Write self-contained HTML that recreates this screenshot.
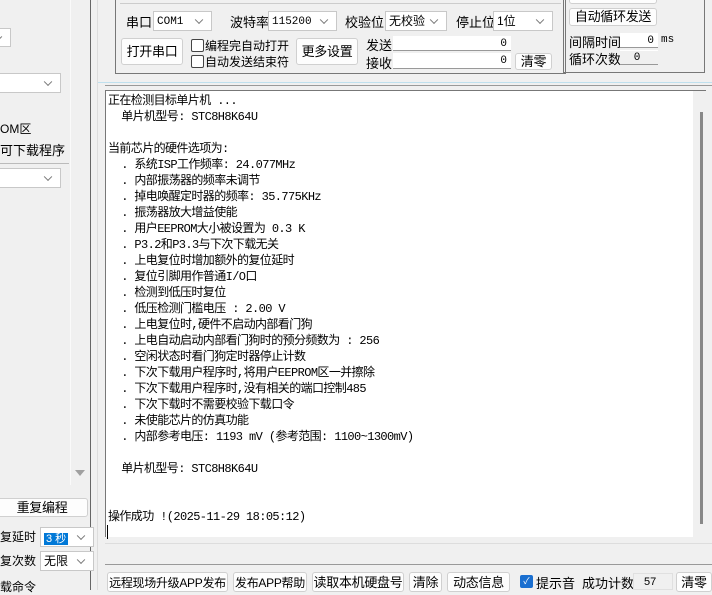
<!DOCTYPE html>
<html><head><meta charset="utf-8"><style>
*{margin:0;padding:0;box-sizing:border-box}
body{width:712px;height:590px;overflow:hidden;background:#f0f0f0;position:relative;font-family:"Liberation Sans","Noto Sans CJK SC",sans-serif;font-size:12px;color:#000}
.a{position:absolute;white-space:nowrap}
.btn{position:absolute;background:#fdfdfd;border:1px solid #d0d0d0;border-radius:3px;text-align:center;white-space:nowrap;font-size:12px;letter-spacing:-0.3px}
.cb{position:absolute;background:#fff;border:1px solid #c8c8c8;white-space:nowrap;padding-left:3px;font-size:11px}
.cb:after{content:"";position:absolute;right:9px;top:50%;width:5px;height:5px;border-right:1px solid #777;border-bottom:1px solid #777;transform:translateY(-70%) rotate(45deg)}
.fld{position:absolute;background:#fff;border-bottom:1px solid #999;border-top:1px solid #fff;text-align:right;padding-right:4px;font-family:"Liberation Mono",monospace;font-size:11px}
.chk{position:absolute;width:13px;height:13px;border:1px solid #333;border-radius:2px;background:#fff}
.mono{font-family:"Liberation Mono","Noto Sans CJK SC",monospace}
#ta{position:absolute;left:105px;top:90px;width:601px;height:447px;background:#fff;border-left:1px solid #777;border-top:1px solid #777}
#ta .l{position:absolute;left:2px;white-space:pre;font-size:12px;line-height:16px;font-family:"Liberation Mono","Noto Sans CJK SC",monospace;letter-spacing:-0.6px}
</style></head><body>
<!-- left panel -->
<div class="cb" style="left:-2px;top:28px;width:13px;height:19px"></div>
<div class="cb" style="left:-2px;top:73px;width:63px;height:20px"></div>
<div class="a" style="left:0;top:120px;font-size:12px">OM区</div>
<div class="a" style="left:0;top:140px;font-size:13px">可下载程序</div>
<div class="a" style="left:0;top:163px;width:69px;height:1px;background:#bbb"></div>
<div class="cb" style="left:-2px;top:168px;width:63px;height:20px"></div>
<div class="a" style="left:70px;top:0;width:20px;height:485px;background:#f0f0f0;border-left:1px solid #fafafa"></div>
<div class="a" style="left:75px;top:470px;width:0;height:0;border-left:5px solid transparent;border-right:5px solid transparent;border-top:6px solid #a0a0a0"></div>
<div class="a" style="left:90px;top:0;width:1px;height:590px;background:#666"></div>
<div class="a" style="left:97px;top:0;width:1px;height:590px;background:#ddd"></div>
<div class="btn" style="left:-4px;top:498px;width:92px;height:19px;line-height:17px;font-size:13px">重复编程</div>
<div class="a" style="left:0;top:528px;font-size:12px">复延时</div>
<div class="cb" style="left:40px;top:527px;width:54px;height:20px"><span style="background:#0078d7;color:#fff;padding:0 2px;position:relative;top:2px">3 秒</span></div>
<div class="a" style="left:0;top:552px;font-size:12px">复次数</div>
<div class="cb" style="left:40px;top:551px;width:54px;height:20px;font-size:12px;line-height:18px">无限</div>
<div class="a" style="left:0;top:578px;font-size:12px">载命令</div>

<!-- top panel -->
<div class="a" style="left:115px;top:-5px;width:451px;height:79px;border:1px solid #777;border-top:none"></div>
<div class="a" style="left:120px;top:3px;width:441px;height:1px;background:#ccc"></div>
<div class="a" style="left:126px;top:12px;font-size:13px">串口</div>
<div class="cb" style="left:153px;top:11px;width:59px;height:20px;line-height:18px" ><span class="mono">COM1</span></div>
<div class="a" style="left:230px;top:12px;font-size:13px">波特率</div>
<div class="cb" style="left:268px;top:11px;width:69px;height:20px;line-height:18px"><span class="mono">115200</span></div>
<div class="a" style="left:345px;top:12px;font-size:13px">校验位</div>
<div class="cb" style="left:385px;top:11px;width:62px;height:20px;line-height:18px;font-size:12px">无校验</div>
<div class="a" style="left:456px;top:12px;font-size:13px">停止位</div>
<div class="cb" style="left:493px;top:11px;width:60px;height:20px;line-height:18px;font-size:12px">1位</div>
<div class="btn" style="left:121px;top:38px;width:62px;height:27px;line-height:25px;font-size:13px">打开串口</div>
<div class="chk" style="left:191px;top:39px;border-color:#444"></div>
<div class="a" style="left:205px;top:37px;font-size:12px">编程完自动打开</div>
<div class="chk" style="left:191px;top:55px;border-color:#444"></div>
<div class="a" style="left:205px;top:53px;font-size:12px">自动发送结束符</div>
<div class="btn" style="left:296px;top:38px;width:62px;height:27px;line-height:25px;font-size:13px">更多设置</div>
<div class="a" style="left:366px;top:35px;font-size:13px">发送</div>
<div class="fld" style="left:393px;top:36px;width:118px;height:15px;line-height:14px">0</div>
<div class="a" style="left:366px;top:53px;font-size:13px">接收</div>
<div class="fld" style="left:393px;top:53px;width:118px;height:16px;line-height:15px">0</div>
<div class="btn" style="left:515px;top:53px;width:37px;height:17px;line-height:15px;font-size:13px">清零</div>
<!-- right group -->
<div class="a" style="left:563px;top:-5px;width:142px;height:78px;border:1px solid #777;border-top:none"></div>
<div class="btn" style="left:569px;top:-6px;width:88px;height:10px"></div>
<div class="btn" style="left:569px;top:8px;width:88px;height:18px;line-height:16px;font-size:13px">自动循环发送</div>
<div class="a" style="left:569px;top:32px;font-size:13px">间隔时间</div>
<div class="fld" style="left:620px;top:33px;width:38px;height:15px;line-height:14px">0</div>
<div class="a mono" style="left:661px;top:34px;font-size:11px">ms</div>
<div class="a" style="left:569px;top:49px;font-size:13px">循环次数</div>
<div class="fld" style="left:620px;top:50px;width:38px;height:15px;line-height:14px;text-align:center;background:#f0f0f0">0</div>
<div class="a" style="left:98px;top:82px;width:614px;height:1px;background:#bfe0ee"></div>
<div class="a" style="left:105px;top:85px;width:607px;height:1px;background:#999"></div>

<!-- text area -->
<div id="ta">
<div class="l" style="top:2px">正在检测目标单片机 ...</div>
<div class="l" style="top:18px">  单片机型号: STC8H8K64U</div>
<div class="l" style="top:50px">当前芯片的硬件选项为:</div>
<div class="l" style="top:66px">  . 系统ISP工作频率: 24.077MHz</div>
<div class="l" style="top:82px">  . 内部振荡器的频率未调节</div>
<div class="l" style="top:98px">  . 掉电唤醒定时器的频率: 35.775KHz</div>
<div class="l" style="top:114px">  . 振荡器放大增益使能</div>
<div class="l" style="top:130px">  . 用户EEPROM大小被设置为 0.3 K</div>
<div class="l" style="top:146px">  . P3.2和P3.3与下次下载无关</div>
<div class="l" style="top:162px">  . 上电复位时增加额外的复位延时</div>
<div class="l" style="top:178px">  . 复位引脚用作普通I/O口</div>
<div class="l" style="top:194px">  . 检测到低压时复位</div>
<div class="l" style="top:210px">  . 低压检测门槛电压 : 2.00 V</div>
<div class="l" style="top:226px">  . 上电复位时,硬件不启动内部看门狗</div>
<div class="l" style="top:242px">  . 上电自动启动内部看门狗时的预分频数为 : 256</div>
<div class="l" style="top:258px">  . 空闲状态时看门狗定时器停止计数</div>
<div class="l" style="top:274px">  . 下次下载用户程序时,将用户EEPROM区一并擦除</div>
<div class="l" style="top:290px">  . 下次下载用户程序时,没有相关的端口控制485</div>
<div class="l" style="top:306px">  . 下次下载时不需要校验下载口令</div>
<div class="l" style="top:322px">  . 未使能芯片的仿真功能</div>
<div class="l" style="top:338px">  . 内部参考电压: 1193 mV (参考范围: 1100~1300mV)</div>
<div class="l" style="top:370px">  单片机型号: STC8H8K64U</div>
<div class="l" style="top:418px">操作成功 !(2025-11-29 18:05:12)</div>
<div class="a" style="left:1px;top:434px;width:1px;height:14px;background:#000"></div>
<div class="a" style="left:587px;top:0;width:14px;height:447px;background:#f0f0f0"></div>
<div class="a" style="left:594px;top:21px;width:3px;height:412px;background:#888"></div>
</div>
<div class="a" style="left:105px;top:543px;width:607px;height:22px;background:#f0f0f0;border-top:1px solid #ddd;border-bottom:1px solid #999"></div>

<!-- bottom buttons -->
<div class="btn" style="left:107px;top:572px;width:121px;height:20px;line-height:20px">远程现场升级APP发布</div>
<div class="btn" style="left:233px;top:572px;width:74px;height:20px;line-height:20px">发布APP帮助</div>
<div class="btn" style="left:312px;top:572px;width:92px;height:20px;line-height:20px;font-size:13px">读取本机硬盘号</div>
<div class="btn" style="left:409px;top:572px;width:33px;height:20px;line-height:20px;font-size:13px">清除</div>
<div class="btn" style="left:447px;top:572px;width:63px;height:20px;line-height:20px;font-size:13px">动态信息</div>
<div class="chk" style="left:520px;top:575px;background:#1a6fd0;border-color:#1a6fd0;color:#fff;font-size:9px;line-height:11px;text-align:center">✓</div>
<div class="a" style="left:536px;top:573px;font-size:13px">提示音</div>
<div class="a" style="left:582px;top:573px;font-size:13px">成功计数</div>
<div class="a" style="left:633px;top:573px;width:40px;height:17px;background:#f0f0f0;border:1px solid #e0e0e0;font-size:11px;padding-left:10px;line-height:16px">57</div>
<div class="btn" style="left:676px;top:572px;width:36px;height:20px;line-height:20px;font-size:13px">清零</div>
</body></html>
